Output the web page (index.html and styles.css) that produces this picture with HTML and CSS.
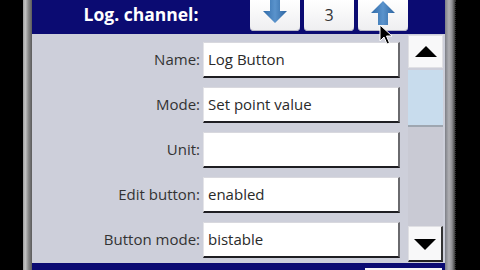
FILE: index.html
```html
<!DOCTYPE html>
<html>
<head>
<meta charset="utf-8">
<link rel="stylesheet" href="styles.css">
</head>
<body>
<div class="screen">
  <div class="black-left"></div>
  <div class="frame frame-left"></div>
  <div class="app">
    <div class="header">
      <div class="title">Log. channel:</div>
      <div class="hbtn">
        <svg width="26" height="24" viewBox="0 0 26 24"><defs><linearGradient id="g1" x1="0" y1="0" x2="1" y2="0"><stop offset="0" stop-color="#2f6aa8"/><stop offset="0.5" stop-color="#5a93cc"/><stop offset="1" stop-color="#2c64a0"/></linearGradient></defs><path d="M8 0 H18 V11 H25 L13 23 L1 11 H8 Z" fill="url(#g1)"/></svg>
      </div>
      <div class="hbtn num">3</div>
      <div class="hbtn">
        <svg width="26" height="26" viewBox="0 0 26 26"><defs><linearGradient id="g2" x1="0" y1="0" x2="1" y2="0"><stop offset="0" stop-color="#2f6aa8"/><stop offset="0.5" stop-color="#5a93cc"/><stop offset="1" stop-color="#2c64a0"/></linearGradient></defs><path d="M13 1 L25 13 H18 V25 H8 V13 H1 Z" fill="url(#g2)"/></svg>
      </div>
      <div class="hrest"></div>
    </div>
    <div class="content">
      <div class="form">
        <div class="row"><div class="label">Name:</div><div class="field">Log Button</div></div>
        <div class="row"><div class="label">Mode:</div><div class="field">Set point value</div></div>
        <div class="row"><div class="label">Unit:</div><div class="field"></div></div>
        <div class="row"><div class="label">Edit button:</div><div class="field">enabled</div></div>
        <div class="row"><div class="label">Button mode:</div><div class="field">bistable</div></div>
      </div>
      <div class="scrollbar">
        <div class="sbtn"><svg width="22" height="11" viewBox="0 0 22 11"><path d="M11 0 L22 11 H0 Z" fill="#000"/></svg></div>
        <div class="thumb"></div>
        <div class="track"></div>
        <div class="sbtn down"><svg width="22" height="11" viewBox="0 0 22 11"><path d="M0 0 H22 L11 11 Z" fill="#000"/></svg></div>
      </div>
    </div>
    <div class="footer"><div class="fbtn"></div></div>
  </div>
  <div class="frame frame-right"></div>
  <div class="black-right"></div>
  <svg class="cursor" width="14" height="22" viewBox="0 0 14 22"><path d="M1 1 V17 L5 13 L8 20 L10.5 19 L7.5 12 H13 Z" fill="#000" stroke="#fff" stroke-width="1"/></svg>
</div>
</body>
</html>
```

FILE: styles.css
```css
html, body {
  margin: 0;
  padding: 0;
  background: #000;
}
.screen {
  position: relative;
  width: 480px;
  height: 270px;
  display: flex;
  overflow: hidden;
  font-family: "Open Sans", "DejaVu Sans", sans-serif;
}
.black-left { width: 23px; background: #000; }
.frame { background: linear-gradient(to right, #9a9a9a, #c4c4c4 25%, #8a8a8a 60%, #5a5a5a); }
.frame-left { width: 9px; }
.frame-right { width: 10px; background: linear-gradient(to right, #7d7f86, #b0b0b4 40%, #8e8e92 70%, #3a3a3a); }
.black-right { flex: 1; background: #000; border-left: 1px dotted #333; }
.app {
  width: 413px;
  display: flex;
  flex-direction: column;
  background: #cdcfda;
}
.header {
  height: 34px;
  background: #0b0b72;
  display: flex;
  align-items: flex-start;
}
.title {
  width: 218px;
  text-align: center;
  color: #fff;
  font-weight: bold;
  font-size: 17.5px;
  line-height: 29px;
}
.hbtn {
  width: 50px;
  height: 31px;
  margin-right: 4px;
  background: linear-gradient(#ffffff, #eeeef0);
  border-radius: 0 0 4px 4px;
  box-shadow: inset 0 -1px 0 #b8b8c4;
  display: flex;
  justify-content: center;
  align-items: flex-start;
}
.hbtn.num {
  color: #333;
  font-size: 16px;
  line-height: 29px;
  align-items: center;
}
.hrest { flex: 1; }
.content {
  flex: 1;
  display: flex;
}
.form {
  width: 375px;
  padding-top: 8px;
  display: flex;
  flex-direction: column;
  gap: 9px;
}
.row {
  display: flex;
  align-items: stretch;
  height: 36px;
}
.label {
  width: 168px;
  text-align: right;
  color: #333;
  font-size: 15px;
  line-height: 35px;
  padding-right: 3px;
}
.field {
  width: 197px;
  background: #fff;
  border-top: 1px solid #d8d8de;
  border-left: 1px solid #e4e4e8;
  border-right: 2px solid #6a6a6e;
  border-bottom: 2px solid #1e1e22;
  box-sizing: border-box;
  color: #2a2a2a;
  font-size: 15px;
  line-height: 33px;
  padding-left: 4px;
}
.scrollbar {
  width: 35px;
  margin-left: 1px;
  display: flex;
  flex-direction: column;
  padding-top: 1px;
}
.sbtn {
  height: 33px;
  background: #f8f8f9;
  border: 1px solid #e0e0e4;
  box-sizing: border-box;
  display: flex;
  justify-content: center;
  align-items: center;
}
.sbtn.down {
  height: 36px;
  border-right: 2px solid #333;
  border-bottom: 2px solid #222;
  padding-top: 2px;
}
.thumb {
  height: 55px;
  margin-top: 2px;
  background: #c8dced;
  border-bottom: 2px solid #9ea6b0;
}
.track {
  flex: 1;
  background: #c9cad4;
}
.footer {
  height: 7px;
  margin-top: 1px;
  background: #0b0b72;
}
.fbtn {
  margin-left: 333px;
  margin-top: 5px;
  width: 77px;
  height: 4px;
  background: #f4f4f6;
}
.cursor {
  position: absolute;
  left: 379px;
  top: 24px;
}
```
